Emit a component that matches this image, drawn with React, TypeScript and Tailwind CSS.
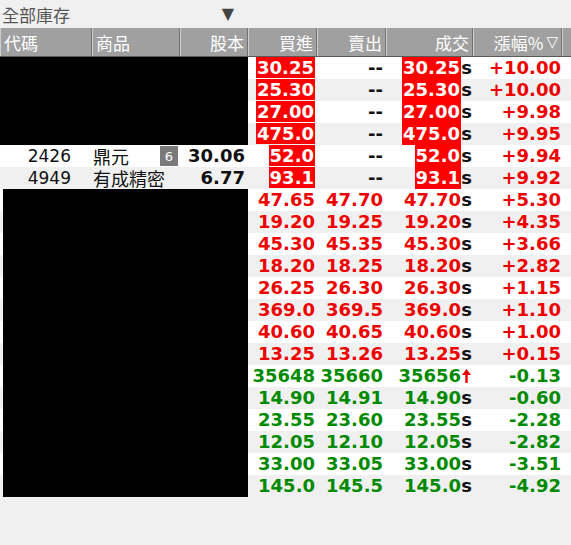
import React from "react";

type Row = {
  code?: string;
  name?: string;
  badge?: string;
  cap?: string;
  buy: string;
  sell: string;
  deal: string;
  chg: string;
  hi?: boolean;
  up?: boolean;
};

const rows: Row[] = [
  { buy: "30.25", sell: "--", deal: "30.25", chg: "+10.00", hi: true },
  { buy: "25.30", sell: "--", deal: "25.30", chg: "+10.00", hi: true },
  { buy: "27.00", sell: "--", deal: "27.00", chg: "+9.98", hi: true },
  { buy: "475.0", sell: "--", deal: "475.0", chg: "+9.95", hi: true },
  { code: "2426", name: "鼎元", badge: "6", cap: "30.06", buy: "52.0", sell: "--", deal: "52.0", chg: "+9.94", hi: true },
  { code: "4949", name: "有成精密", cap: "6.77", buy: "93.1", sell: "--", deal: "93.1", chg: "+9.92", hi: true },
  { buy: "47.65", sell: "47.70", deal: "47.70", chg: "+5.30" },
  { buy: "19.20", sell: "19.25", deal: "19.20", chg: "+4.35" },
  { buy: "45.30", sell: "45.35", deal: "45.30", chg: "+3.66" },
  { buy: "18.20", sell: "18.25", deal: "18.20", chg: "+2.82" },
  { buy: "26.25", sell: "26.30", deal: "26.30", chg: "+1.15" },
  { buy: "369.0", sell: "369.5", deal: "369.0", chg: "+1.10" },
  { buy: "40.60", sell: "40.65", deal: "40.60", chg: "+1.00" },
  { buy: "13.25", sell: "13.26", deal: "13.25", chg: "+0.15" },
  { buy: "35648", sell: "35660", deal: "35656", chg: "-0.13", up: true },
  { buy: "14.90", sell: "14.91", deal: "14.90", chg: "-0.60" },
  { buy: "23.55", sell: "23.60", deal: "23.55", chg: "-2.28" },
  { buy: "12.05", sell: "12.10", deal: "12.05", chg: "-2.82" },
  { buy: "33.00", sell: "33.05", deal: "33.00", chg: "-3.51" },
  { buy: "145.0", sell: "145.5", deal: "145.0", chg: "-4.92" },
];

const cols = "grid grid-cols-[92px_88px_68px_69px_69px_87px_89px_1fr]";

function UpArrow() {
  return (
    <svg width="11" height="16" viewBox="0 0 11 16" className="inline-block">
      <path d="M5.5 1 L10 7 L6.7 7 L6.7 15 L4.3 15 L4.3 7 L1 7 Z" fill="#ee0000" />
    </svg>
  );
}

function HeadCell({ label, left }: { label: React.ReactNode; left?: boolean }) {
  return (
    <div
      className={`flex items-center border-l border-l-[#cfcfcf] border-r border-r-[#707070] px-[3px] ${
        left ? "justify-start" : "justify-end"
      }`}
    >
      {label}
    </div>
  );
}

export default function App() {
  return (
    <div className="min-h-[545px] w-[571px] bg-[#f0f0f0] font-['DejaVu_Sans','Noto_Sans_CJK_TC',sans-serif]">
      <div className="flex h-[28px] items-center justify-between pl-[2px] pr-[337px]">
        <span className="font-['Noto_Sans_CJK_TC',sans-serif] text-[17px] leading-none text-[#555]">全部庫存</span>
        <span className="text-[16px] leading-none text-[#444]">▼</span>
      </div>

      <div
        className={`${cols} h-[29px] border-b border-b-[#5a5a5a] bg-[#a0a0a0] font-['Noto_Sans_CJK_TC',sans-serif] text-[17px] leading-none text-white`}
      >
        <HeadCell label="代碼" left />
        <HeadCell label="商品" left />
        <HeadCell label="股本" />
        <HeadCell label="買進" />
        <HeadCell label="賣出" />
        <HeadCell label="成交" />
        <HeadCell
          label={
            <span className="flex items-center gap-[3px]">
              漲幅%<span className="font-['DejaVu_Sans',sans-serif] text-[15px]">▽</span>
            </span>
          }
        />
        <div className="border-l border-l-[#cfcfcf]" />
      </div>

      <div>
        {rows.map((r, i) => {
          const tone = r.chg.startsWith("-") ? "text-[#008a00]" : "text-[#ee0000]";
          const masked = !r.code;
          return (
            <div
              key={i}
              className={`${cols} h-[22px] text-[18px] font-bold leading-[22px] ${
                i % 2 === 0 ? "bg-white" : "bg-[#f0f0f0]"
              }`}
            >
              {masked ? (
                <div className={`col-span-3 bg-black ${i > 5 ? "ml-[3px]" : ""}`} />
              ) : (
                <>
                  <div className="pr-[21px] text-right text-[17px] font-normal text-[#111]">{r.code}</div>
                  <div className="flex items-center justify-between pl-[1px] pr-[2px] font-normal text-[#111]">
                    <span className="font-['Noto_Sans_CJK_TC',sans-serif] text-[18px] leading-[18px]">{r.name}</span>
                    {r.badge ? (
                      <span className="flex h-[20px] w-[18px] items-center justify-center bg-[#7a7a7a] text-[13px] leading-none text-white">
                        {r.badge}
                      </span>
                    ) : null}
                  </div>
                  <div className="pr-[3px] text-right text-[#111]">{r.cap}</div>
                </>
              )}
              <div className={`pr-[2px] text-right ${tone}`}>
                {r.hi ? <span className="bg-[#ff0000] px-[1px] text-white">{r.buy}</span> : r.buy}
              </div>
              <div className={`pr-[3px] text-right ${r.sell === "--" ? "text-[#111]" : tone}`}>{r.sell}</div>
              <div className={`flex items-center justify-end pr-[1px] ${tone}`}>
                {r.hi ? <span className="bg-[#ff0000] px-[1px] text-white">{r.deal}</span> : <span>{r.deal}</span>}
                <span className="inline-flex w-[11px] justify-center text-[#111]">{r.up ? <UpArrow /> : "s"}</span>
              </div>
              <div className={`pr-[1px] text-right ${tone}`}>{r.chg}</div>
              <div />
            </div>
          );
        })}
      </div>
    </div>
  );
}
